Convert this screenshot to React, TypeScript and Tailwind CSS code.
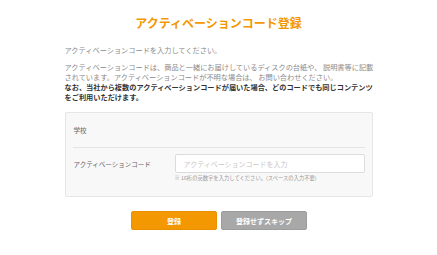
import React from 'react';

const jp = { fontFamily: '"Noto Sans CJK JP", "Noto Sans", sans-serif' };

const App: React.FC = () => {
    return (
        <div className="min-h-screen bg-white" style={jp}>
            <div className="w-[308px] mx-auto pt-[15px]">
                <h1 className="text-center text-[12px] leading-[16px] font-bold text-[#f39800]">アクティベーションコード登録</h1>

                <p className="mt-[14px] text-[7.2px] leading-[10px] text-[#8a8a8a] whitespace-nowrap">アクティベーションコードを入力してください。</p>

                <div className="mt-[7px] text-[7.2px] leading-[10px] whitespace-nowrap">
                    <p className="text-[#8a8a8a]">アクティベーションコードは、商品と一緒にお届けしているディスクの台紙や、 説明書等に記載</p>
                    <p className="text-[#8a8a8a]">されています。アクティベーションコードが不明な場合は、 お問い合わせください。</p>
                    <p className="font-bold text-[#333]">なお、当社から複数のアクティベーションコードが届いた場合、どのコードでも同じコンテンツ</p>
                    <p className="font-bold text-[#333]">をご利用いただけます。</p>
                </div>

                <div className="mt-[10px] bg-[#f8f8f8] border border-[#e6e6e6] rounded-[2px] px-[7px] pb-[15px]">
                    <div className="h-[34px] flex items-center pl-[1px] text-[6.5px] leading-[8px] text-[#666]">学校</div>
                    <div className="h-px bg-[#e4e4e4]" />
                    <div className="flex mt-[6px]">
                        <div className="w-[102px] h-[19px] flex items-center pl-[1px] text-[6.5px] leading-[8px] text-[#666] whitespace-nowrap">アクティベーションコード</div>
                        <div className="flex-1">
                            <input
                                type="text"
                                placeholder="アクティベーションコードを入力"
                                className="block w-full h-[19px] bg-white border border-[#dcdcdc] rounded-[2px] px-[8px] text-[7px] leading-[10px] text-[#333] placeholder:text-[#c8c8c8] outline-none"
                            />
                            <p className="mt-[2px] text-[5.3px] leading-[6px] text-[#999] whitespace-nowrap">※ 16桁の英数字を入力してください。(スペースの入力不要)</p>
                        </div>
                    </div>
                </div>

                <div className="mt-[14px] flex justify-center gap-[4px] pl-[1px]">
                    <button className="w-[86px] h-[19px] bg-[#f39800] border border-[#e89000] rounded-[2px] text-white text-[7px] leading-[10px] font-bold">登録</button>
                    <button className="w-[86px] h-[19px] bg-[#a8a8a8] border border-[#9c9c9c] rounded-[2px] text-white text-[7px] leading-[10px] font-bold">登録せずスキップ</button>
                </div>
            </div>
        </div>
    );
};

export default App;
